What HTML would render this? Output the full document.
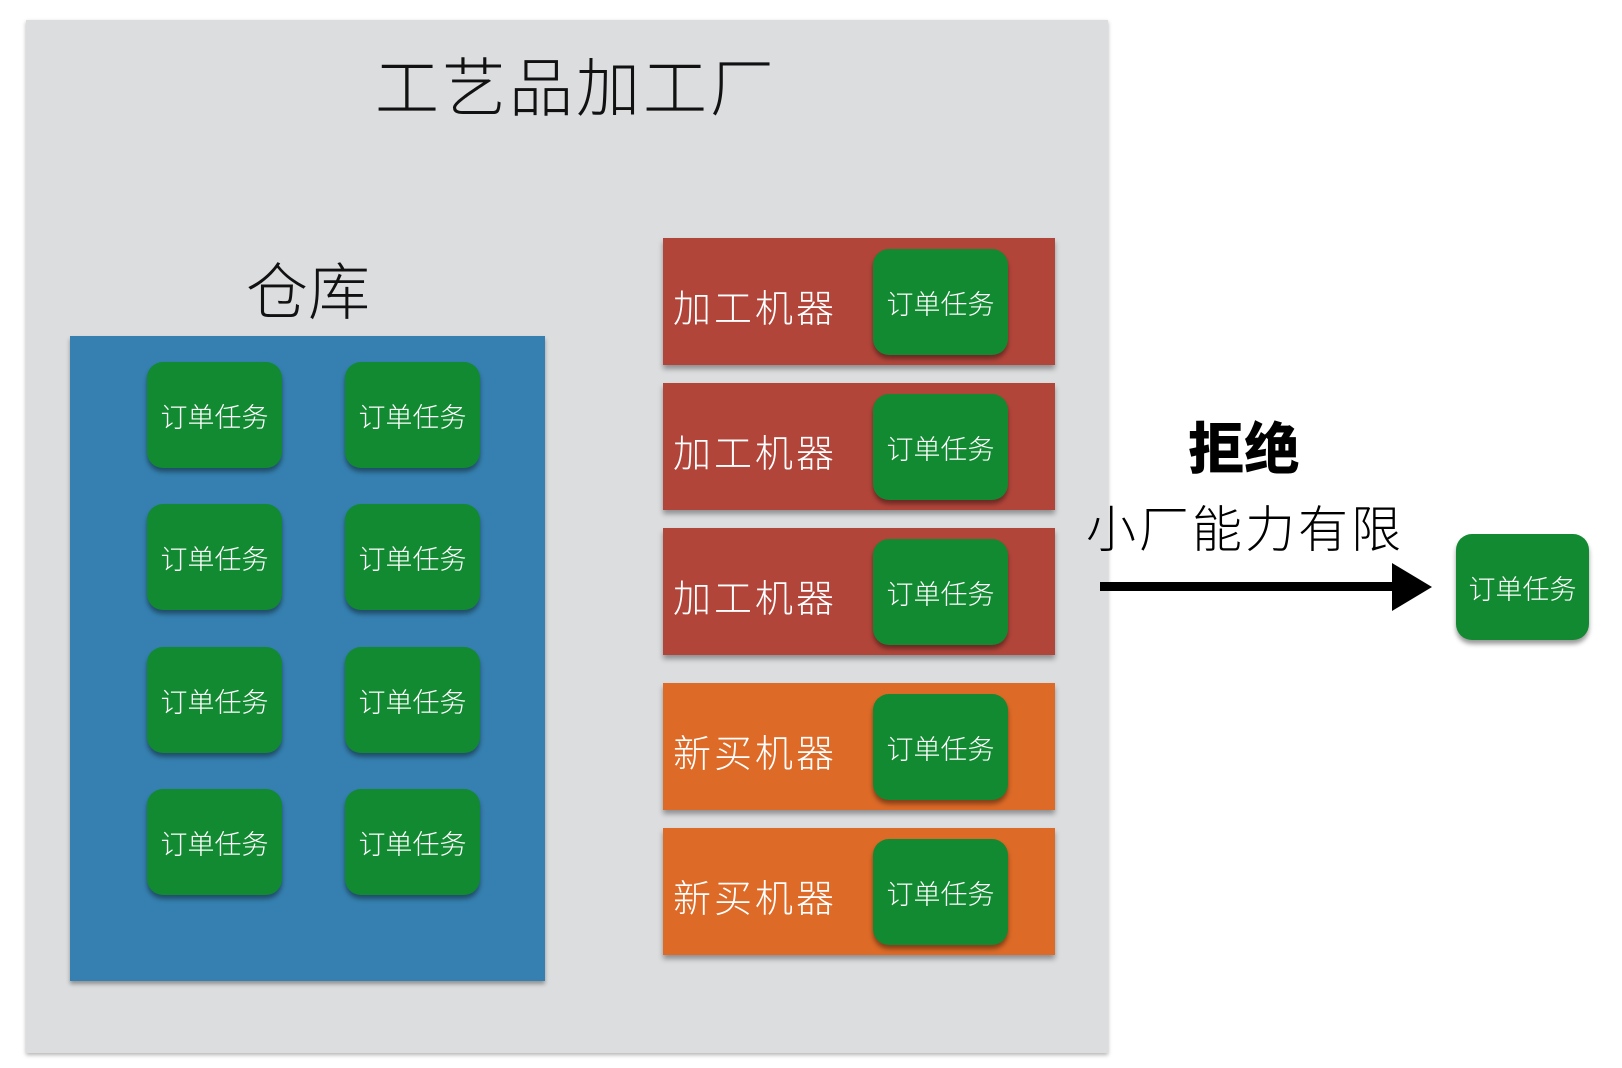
<!DOCTYPE html>
<html><head><meta charset="utf-8"><style>
body{margin:0;width:1622px;height:1068px;background:#fff;position:relative;overflow:hidden;font-family:"Liberation Sans","Noto Sans CJK SC",sans-serif}
div{position:absolute;box-sizing:border-box}
.panel{left:26px;top:20px;width:1082px;height:1033px;background:#dcdddf;box-shadow:0 2px 4px rgba(0,0,0,.3)}
.t{white-space:nowrap;font-weight:300;color:#111}
.blue{left:70px;top:336px;width:475px;height:645px;background:#3580b0;box-shadow:0 3px 4px rgba(0,0,0,.35)}
.card{width:135px;height:106px;background:#128a31;border-radius:16px;box-shadow:0 4px 5px rgba(0,0,0,.4);color:#fff;font-size:27px;display:flex;align-items:center;justify-content:center;font-weight:300;letter-spacing:0}
.m{left:663px;width:392px;height:127px;box-shadow:0 4px 5px rgba(0,0,0,.35)}
.m span{position:absolute;left:10px;top:40px;color:#fff;font-size:38px;font-weight:300;letter-spacing:3px}
.m .card{left:210px;top:11px}
.r{background:#b2453a}.o{background:#dd6a27}
</style></head><body>
<div class="panel"></div>
<div class="t" style="left:375px;top:38px;font-size:64px;letter-spacing:3px">工艺品加工厂</div>
<div class="t" style="left:246px;top:242px;font-size:62px">仓库</div>
<div class="blue"></div>
<div class="card" style="left:147px;top:362px">订单任务</div><div class="card" style="left:345px;top:362px">订单任务</div>
<div class="card" style="left:147px;top:504px">订单任务</div><div class="card" style="left:345px;top:504px">订单任务</div>
<div class="card" style="left:147px;top:647px">订单任务</div><div class="card" style="left:345px;top:647px">订单任务</div>
<div class="card" style="left:147px;top:789px">订单任务</div><div class="card" style="left:345px;top:789px">订单任务</div>
<div class="m r" style="top:238px"><span>加工机器</span><div class="card">订单任务</div></div>
<div class="m r" style="top:383px"><span>加工机器</span><div class="card">订单任务</div></div>
<div class="m r" style="top:528px"><span>加工机器</span><div class="card">订单任务</div></div>
<div class="m o" style="top:683px"><span>新买机器</span><div class="card">订单任务</div></div>
<div class="m o" style="top:828px"><span>新买机器</span><div class="card">订单任务</div></div>
<div class="t" style="left:1188px;top:405px;font-size:56px;font-weight:900;color:#000">拒绝</div>
<div class="t" style="left:1086px;top:490px;font-size:50px;letter-spacing:3px;color:#000">小厂能力有限</div>
<svg style="position:absolute;left:0;top:0" width="1622" height="1068"><rect x="1100" y="582" width="292" height="9" fill="#000"/><polygon points="1392,563 1432,587 1392,611" fill="#000"/></svg>
<div class="card" style="left:1456px;top:534px;width:133px">订单任务</div>
</body></html>
